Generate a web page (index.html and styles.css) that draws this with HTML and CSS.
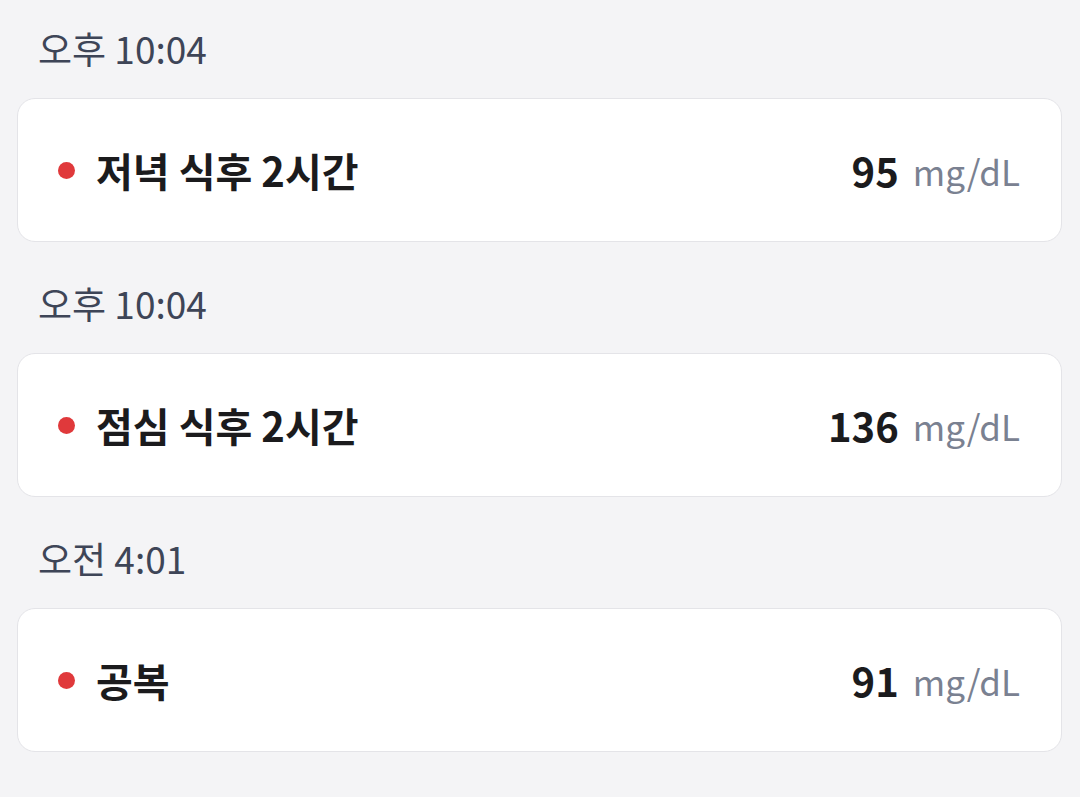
FILE: index.html
```html
<!DOCTYPE html>
<html lang="en">
<head>
    <meta charset="UTF-8">
    <meta name="viewport" content="width=device-width, initial-scale=1.0">
    <title>혈당 기록</title>
    <link rel="stylesheet" href="styles.css">
</head>
<body>
    <div class="records">
        <div class="record">
            <div class="record-time">오후 10:04</div>
            <div class="record-card">
                <span class="dot"></span>
                <span class="record-label">저녁 식후 2시간</span>
                <span class="record-value">95</span>
                <span class="record-unit">mg/dL</span>
            </div>
        </div>
        <div class="record">
            <div class="record-time">오후 10:04</div>
            <div class="record-card">
                <span class="dot"></span>
                <span class="record-label">점심 식후 2시간</span>
                <span class="record-value">136</span>
                <span class="record-unit">mg/dL</span>
            </div>
        </div>
        <div class="record">
            <div class="record-time">오전 4:01</div>
            <div class="record-card">
                <span class="dot"></span>
                <span class="record-label">공복</span>
                <span class="record-value">91</span>
                <span class="record-unit">mg/dL</span>
            </div>
        </div>
    </div>
</body>
</html>
```

FILE: styles.css
```css
body {
    font-family: "Noto Sans CJK KR", "Noto Sans", sans-serif;
    background-color: #f4f4f6;
    margin: 0;
}
.records {
    padding: 22px 18px 0 17px;
}
.record {
    margin-bottom: 35px;
}
.record-time {
    font-size: 37px;
    line-height: 52px;
    color: #3e4557;
    padding-left: 21px;
    margin-bottom: 24px;
}
.record-card {
    display: flex;
    align-items: center;
    height: 144px;
    box-sizing: border-box;
    padding: 0 41px 0 40px;
    background-color: #fff;
    border: 1px solid #e4e4e8;
    border-radius: 18px;
}
.dot {
    width: 17px;
    height: 17px;
    border-radius: 50%;
    background-color: #e0393b;
    margin-right: 21px;
}
.record-label {
    flex: 1;
    font-size: 40px;
    font-weight: bold;
    color: #1b1b1d;
}
.record-value {
    font-size: 40px;
    font-weight: bold;
    color: #1b1b1d;
    margin-right: 14px;
}
.record-unit {
    font-size: 35px;
    color: #7a8191;
}
```
